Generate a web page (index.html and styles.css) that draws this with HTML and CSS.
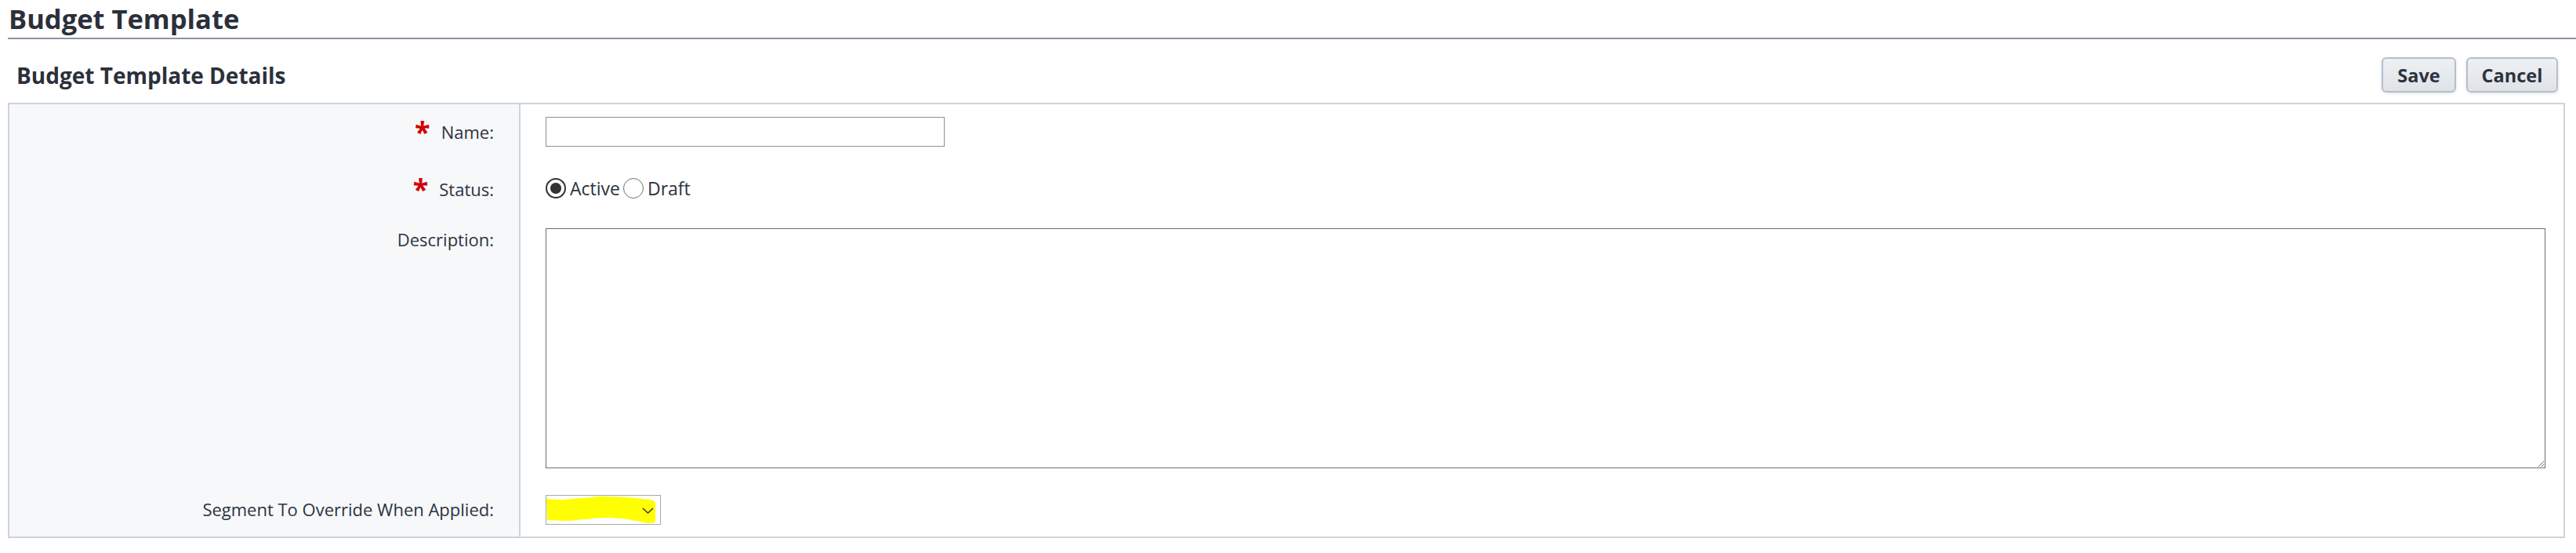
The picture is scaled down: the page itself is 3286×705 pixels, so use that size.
FILE: index.html
```html
<!DOCTYPE html>
<html lang="en">
<head>
<meta charset="utf-8">
<title>Budget Template</title>
<link rel="stylesheet" href="styles.css">
</head>
<body>
<h1 class="page-title">Budget Template</h1>
<div class="section-head">
  <h2 class="section-title">Budget Template Details</h2>
  <div class="actions">
    <button class="btn btn-save" type="button">Save</button>
    <button class="btn btn-cancel" type="button">Cancel</button>
  </div>
</div>
<div class="panel">
  <div class="label row-name"><span class="star">*</span><span>Name:</span></div>
  <div class="field row-name"><input class="text-input" type="text"></div>

  <div class="label label-status row-status"><span class="star">*</span><span>Status:</span></div>
  <div class="field row-status">
    <label class="radio"><input type="radio" name="status" checked><span>Active</span></label>
    <label class="radio"><input type="radio" name="status"><span>Draft</span></label>
  </div>

  <div class="label label-top row-desc"><span>Description:</span></div>
  <div class="field row-desc"><textarea class="textarea"></textarea></div>

  <div class="label row-seg"><span>Segment To Override When Applied:</span></div>
  <div class="field row-seg">
    <div class="select">
      <svg class="select-art" width="145" height="36" viewBox="0 0 145 36">
        <path d="M0 4 C8 4 16 6 23 5 C33 4 40 3 48 3 C60 2 68 0 78 1 C88 1 96 2 103 2 C115 3 125 4 133 5 C137 6 139 8 139 10 L139 34 C135 35 131 35 129 35 C122 34 118 32 113 32 C105 30 99 29 93 29 C85 28 80 28 73 28 C63 28 56 30 48 30 C38 31 31 32 23 32 C15 32 8 31 1 31 Z" fill="#ffff00"/>
        <polyline points="123,16 129.5,22 136,16" fill="none" stroke="#3a3a3a" stroke-width="1.6"/>
      </svg>
    </div>
  </div>
</div>
</body>
</html>
```

FILE: styles.css
```css
* { box-sizing: border-box; }

body {
  margin: 0;
  background: #ffffff;
  color: #2d3340;
  font-family: "Open Sans", "Noto Sans", "Liberation Sans", sans-serif;
}

.page-title {
  margin: 0 0 0 10px;
  height: 50px;
  font-size: 34.5px;
  line-height: 48px;
  font-weight: 700;
  color: #2b303b;
  border-bottom: 2px solid #8b939f;
  padding-left: 1px;
}

.section-head {
  display: flex;
  align-items: center;
  justify-content: space-between;
  margin: 0 14px 0 10px;
  padding: 23px 9px 13px 11px;
}

.section-title {
  margin: 0;
  font-size: 28px;
  font-weight: 700;
  color: #2b303b;
  line-height: 36px;
}

.actions {
  display: flex;
  gap: 13px;
}

.btn {
  height: 45px;
  font-family: inherit;
  font-size: 23.5px;
  font-weight: 700;
  color: #2d3340;
  border: 2px solid #b4bfcc;
  border-radius: 6px;
  background: linear-gradient(#eef0f3, #dfe3e8);
  box-shadow: 0 1px 4px rgba(0, 0, 0, 0.12);
  padding: 0;
}

.btn-save { width: 95px; }
.btn-cancel { width: 117px; }

.panel {
  margin: 0 14px 0 10px;
  border: 2px solid #cdd3dc;
  display: grid;
  grid-template-columns: 652px 1fr;
}

.label {
  background: #f6f8fa;
  border-right: 2px solid #cdd3dc;
  display: flex;
  align-items: center;
  justify-content: flex-end;
  padding-right: 32px;
  font-size: 22px;
  line-height: 34px;
  color: #2d3340;
}

.label-status {
  padding-top: 10px;
}

.label-top {
  align-items: flex-start;
  padding-top: 19px;
}

.star {
  color: #d10000;
  font-weight: 700;
  font-size: 36px;
  line-height: 34px;
  margin-right: 14px;
}

.field {
  padding-left: 32px;
  padding-right: 23px;
}

.field.row-name { padding-top: 16px; padding-bottom: 16px; }
.field.row-status { padding-top: 20px; padding-bottom: 12px; display: flex; align-items: center; gap: 4px; }
.field.row-desc { padding-top: 22px; padding-bottom: 16px; }
.field.row-seg { padding-top: 18px; padding-bottom: 15px; }

.text-input {
  display: block;
  width: 509px;
  height: 38px;
  border: 1px solid #8f8f8f;
  background: #fff;
  margin: 0;
}

.radio {
  display: flex;
  align-items: center;
  gap: 5px;
  height: 34px;
  font-size: 23px;
  color: #2d3340;
}

.radio input {
  appearance: none;
  -webkit-appearance: none;
  margin: 0;
  width: 26px;
  height: 26px;
  border-radius: 50%;
  border: 1.5px solid #707070;
  background: #fff;
}

.radio input:checked {
  border: 2px solid #333333;
  background: radial-gradient(circle, #333333 0 6.5px, #ffffff 7.5px);
}

.textarea {
  display: block;
  width: 100%;
  height: 306px;
  border: 1px solid #6e6e6e;
  margin: 0;
  resize: both;
  background: #fff;
}

.select {
  width: 147px;
  height: 38px;
  border: 1px solid #a9a9a9;
  background: #fff;
  padding: 0;
}

.select-art {
  display: block;
}
```
